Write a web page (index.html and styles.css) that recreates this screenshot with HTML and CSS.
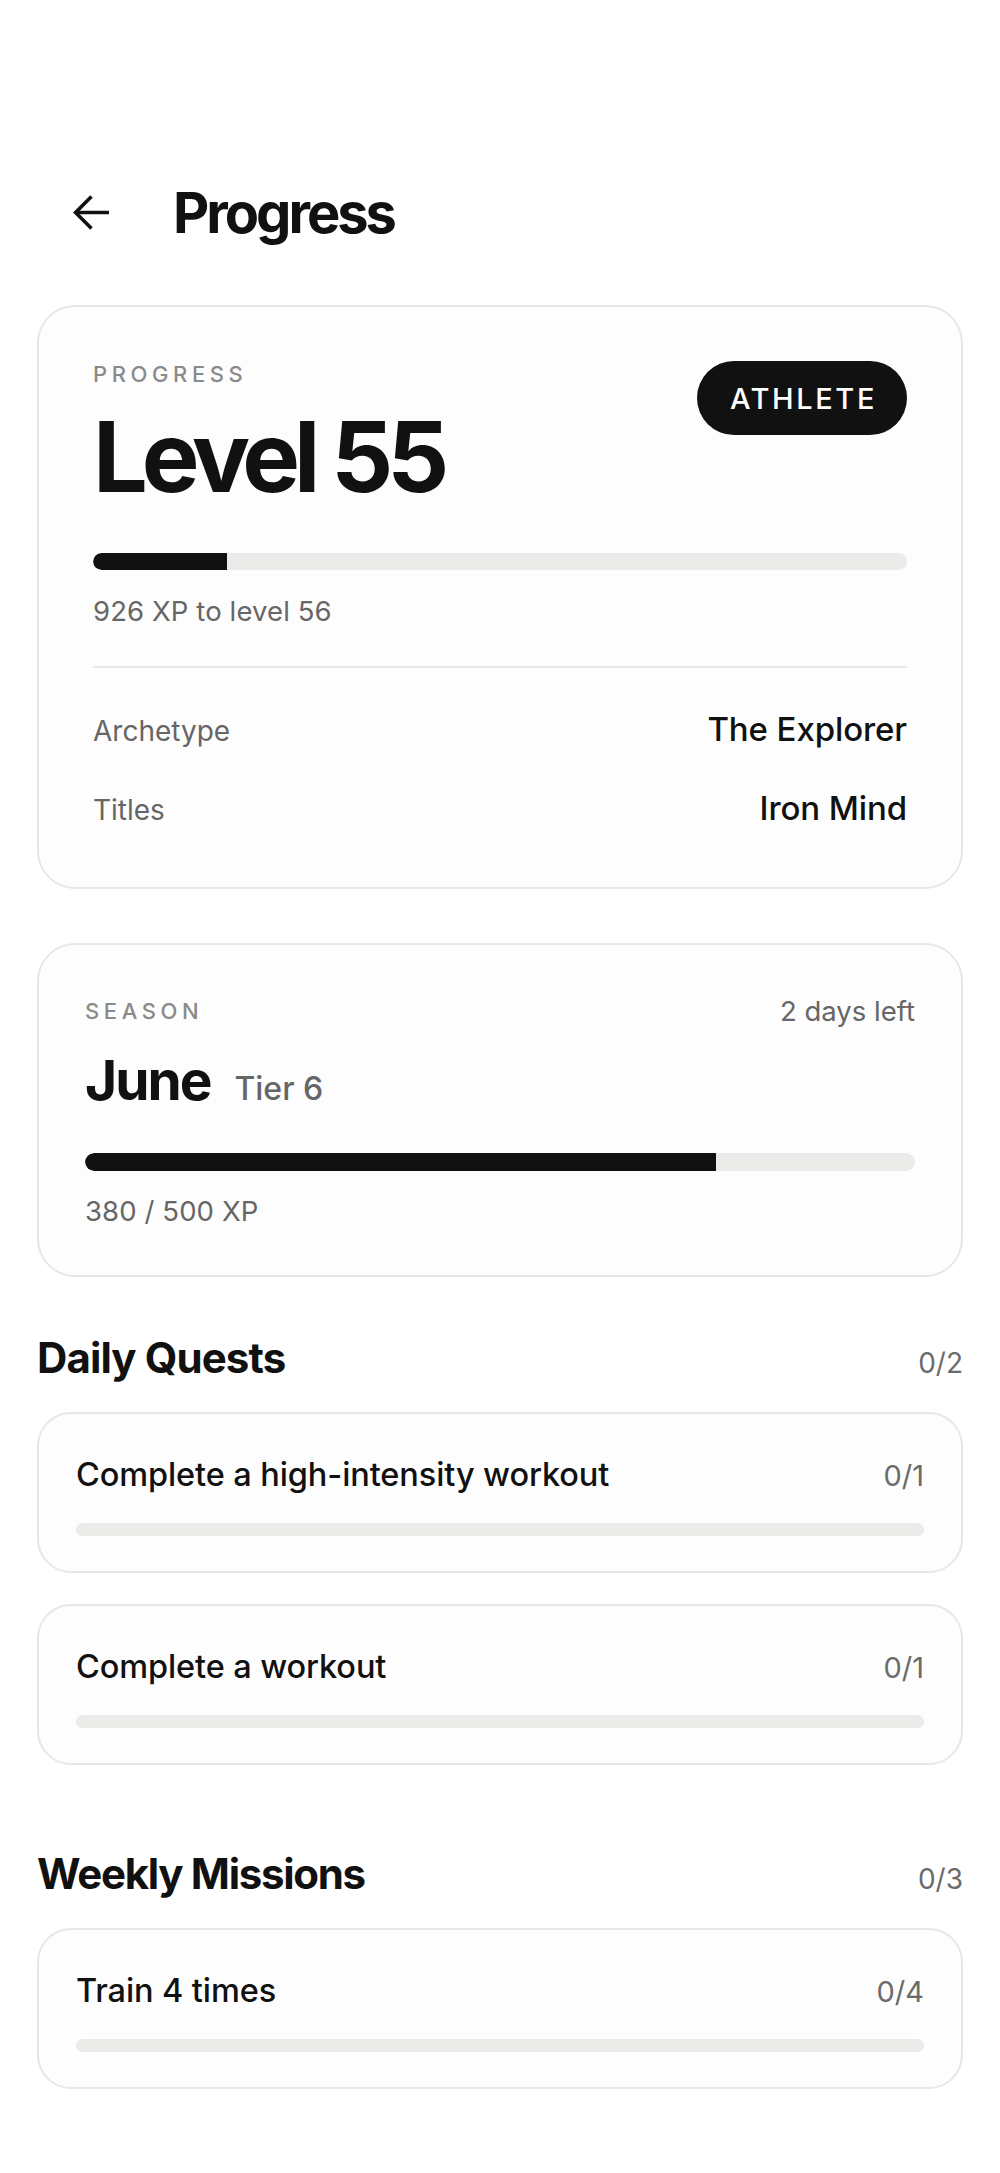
FILE: index.html
```html
<!DOCTYPE html>
<html lang="en">
<head>
<meta charset="utf-8">
<title>Progress</title>
<link rel="stylesheet" href="styles.css">
</head>
<body>
<div class="page">
  <header class="topbar">
    <button class="back" aria-label="Back">
      <svg width="36" height="36" viewBox="0 0 36 36" fill="none" stroke="#111" stroke-width="3.6" stroke-linecap="butt" stroke-linejoin="miter">
        <path d="M36 17.5H3"/>
        <path d="M18.5 1.5L2.5 17.5L18.5 33.5"/>
      </svg>
    </button>
    <h1 class="title">Progress</h1>
  </header>

  <section class="card level-card">
    <div class="level-top">
      <div>
        <div class="eyebrow">PROGRESS</div>
        <div class="level">Level 55</div>
      </div>
      <span class="badge">ATHLETE</span>
    </div>
    <div class="bar bar-lg"><div class="fill" style="width:16.5%"></div></div>
    <div class="muted xp">926 XP to level 56</div>
    <div class="divider"></div>
    <div class="kv">
      <span class="k">Archetype</span>
      <span class="v">The Explorer</span>
    </div>
    <div class="kv kv-2">
      <span class="k">Titles</span>
      <span class="v">Iron Mind</span>
    </div>
  </section>

  <section class="card season-card">
    <div class="season-top">
      <span class="eyebrow">SEASON</span>
      <span class="muted days">2 days left</span>
    </div>
    <div class="season-name">
      <span class="month">June</span>
      <span class="tier">Tier 6</span>
    </div>
    <div class="bar bar-season"><div class="fill" style="width:76%"></div></div>
    <div class="muted xp season-xp">380 / 500 XP</div>
  </section>

  <section class="group daily">
    <div class="group-head">
      <h2>Daily Quests</h2>
      <span class="count">0/2</span>
    </div>
    <div class="quest">
      <div class="quest-row">
        <span class="quest-name">Complete a high-intensity workout</span>
        <span class="count quest-count">0/1</span>
      </div>
      <div class="bar bar-sm"><div class="fill" style="width:0%"></div></div>
    </div>
    <div class="quest">
      <div class="quest-row">
        <span class="quest-name">Complete a workout</span>
        <span class="count quest-count">0/1</span>
      </div>
      <div class="bar bar-sm"><div class="fill" style="width:0%"></div></div>
    </div>
  </section>

  <section class="group weekly">
    <div class="group-head">
      <h2>Weekly Missions</h2>
      <span class="count">0/3</span>
    </div>
    <div class="quest">
      <div class="quest-row">
        <span class="quest-name">Train 4 times</span>
        <span class="count quest-count">0/4</span>
      </div>
      <div class="bar bar-sm"><div class="fill" style="width:0%"></div></div>
    </div>
  </section>
</div>
</body>
</html>
```

FILE: styles.css
```css
* { box-sizing: border-box; }

html, body {
  margin: 0;
  padding: 0;
  background: #ffffff;
}

body {
  font-family: Inter, "Noto Sans", sans-serif;
  color: #111111;
}

.page {
  width: 1000px;
  padding: 0 37px 80px;
}

.topbar {
  display: flex;
  align-items: center;
  height: 70px;
  margin-top: 178px;
  padding-left: 36px;
}

.back {
  display: flex;
  width: 36px;
  height: 36px;
  padding: 0;
  border: 0;
  background: none;
}

.title {
  margin: 0 0 0 64px;
  font-size: 56px;
  line-height: 56px;
  font-weight: 700;
  letter-spacing: -3px;
}

.card {
  border: 2px solid #e7e7e7;
  border-radius: 38px;
  background: #fdfdfd;
}

.level-card {
  margin-top: 57px;
  padding: 54px 54px 57px;
}

.level-top {
  display: flex;
  justify-content: space-between;
  align-items: flex-start;
}

.eyebrow {
  font-size: 22px;
  line-height: 26px;
  font-weight: 500;
  letter-spacing: 4.6px;
  color: #8a8a8a;
}

.level {
  margin-top: 20px;
  font-size: 97px;
  line-height: 99px;
  font-weight: 700;
  letter-spacing: -6px;
}

.badge {
  display: inline-flex;
  align-items: center;
  height: 74px;
  padding: 0 30px 0 33px;
  border-radius: 37px;
  background: #111111;
  color: #ffffff;
  font-size: 29px;
  font-weight: 500;
  letter-spacing: 2.6px;
}

.bar {
  background: #ebebea;
  border-radius: 10px;
  overflow: hidden;
}

.fill {
  height: 100%;
  background: #111111;
  border-radius: 10px 0 0 10px;
}

.bar-lg {
  height: 17px;
  margin-top: 47px;
}

.muted {
  color: #666666;
}

.xp {
  font-size: 27.5px;
  line-height: 35px;
  margin-top: 24px;
  letter-spacing: 0.1px;
}

.divider {
  height: 2px;
  background: #e7e7e7;
  margin-top: 37px;
}

.kv {
  display: flex;
  justify-content: space-between;
  align-items: baseline;
  line-height: 40px;
  margin-top: 41px;
}

.kv-2 {
  margin-top: 37px;
}

.k {
  font-size: 28px;
  color: #666666;
}

.v {
  font-size: 33px;
  font-weight: 500;
  letter-spacing: -0.1px;
}

.season-card {
  margin-top: 54px;
  padding: 48px 46px 46px;
}

.season-top {
  display: flex;
  justify-content: space-between;
  align-items: center;
  height: 36px;
}

.days {
  font-size: 27.5px;
  line-height: 36px;
}

.season-name {
  display: flex;
  align-items: baseline;
  gap: 24px;
  margin-top: 24px;
  line-height: 55px;
}

.month {
  font-size: 55px;
  font-weight: 700;
  letter-spacing: -2px;
}

.tier {
  font-size: 32px;
  font-weight: 500;
  color: #666666;
}

.bar-season {
  height: 18px;
  margin-top: 37px;
}

.season-xp {
  margin-top: 23px;
}

.group-head {
  display: flex;
  justify-content: space-between;
  align-items: baseline;
  line-height: 48px;
}

.group-head h2 {
  margin: 0;
  font-size: 42px;
  font-weight: 700;
  letter-spacing: -0.9px;
}

.weekly .group-head h2 {
  letter-spacing: -1.3px;
}

.count {
  font-size: 28px;
  color: #6b6b6b;
}

.quest-count {
  font-size: 29px;
}

.daily {
  margin-top: 57px;
}

.weekly {
  margin-top: 85px;
}

.quest {
  margin-top: 31px;
  padding: 42px 37px 35px;
  border: 2px solid #e7e7e7;
  border-radius: 34px;
  background: #fdfdfd;
}

.group-head + .quest {
  margin-top: 25px;
}

.quest-row {
  display: flex;
  justify-content: space-between;
  align-items: baseline;
  line-height: 38px;
}

.quest-name {
  font-size: 32.5px;
  font-weight: 500;
  letter-spacing: -0.1px;
}

.bar-sm {
  height: 13px;
  margin-top: 28px;
}
```
